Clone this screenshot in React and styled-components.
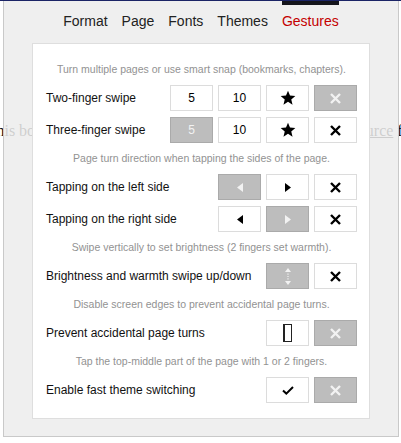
import styled, { createGlobalStyle } from "styled-components";

const GlobalStyle = createGlobalStyle`
  html, body {
    margin: 0;
    padding: 0;
    background: #fff;
  }
  body {
    font-family: "Liberation Sans", Arial, sans-serif;
    width: 401px;
    height: 443px;
    overflow: hidden;
  }
`;

const Page = styled.div`
  position: relative;
  height: 443px;
  overflow: hidden;
`;

const TopRule = styled.div`
  height: 1px;
  background: #1b2466;
`;

/* page text lying behind the popup */
const Backdrop = styled.p`
  margin: 0;
  padding-top: 120px;
  display: flex;
  justify-content: space-between;
  white-space: nowrap;
  font-family: "Liberation Serif", "Times New Roman", serif;
  font-size: 16px;
  line-height: 20px;
  color: #111;

  span:first-child {
    margin-left: -8px;
  }
  span:last-child {
    margin-right: -15px;
  }
  a {
    color: #111;
    text-decoration: underline;
  }
`;

const Panel = styled.div`
  position: absolute;
  top: 1px;
  left: 3px;
  width: 396px;
  height: 436px;
  box-sizing: border-box;
  background: rgba(236, 236, 236, 0.86);
  border: 1px solid #c9c9c9;
  border-top: none;
  padding: 0 28px;
  display: flex;
  flex-direction: column;
`;

const Tabs = styled.nav`
  display: flex;
  justify-content: center;
  align-items: flex-start;
  gap: 14px;
`;

const Tab = styled.div`
  box-sizing: border-box;
  border-top: 4px solid ${(p) => (p.$active ? "#15151c" : "transparent")};
  padding-top: 8px;
  font-size: 14px;
  line-height: 16px;
  color: ${(p) => (p.$active ? "#c40000" : "#222")};
`;

const Card = styled.div`
  margin-top: 14px;
  background: #fff;
  border: 1px solid #dedede;
  padding: 10px 12px 15px 13px;
`;

const Desc = styled.div`
  padding: 9px 0;
  font-size: 10.5px;
  line-height: 13px;
  color: #929292;
  text-align: center;
`;

const Rows = styled.div`
  display: flex;
  flex-direction: column;
  gap: 6px;
`;

const Row = styled.div`
  display: flex;
  align-items: center;
  height: 26px;
`;

const Label = styled.span`
  flex: 1;
  font-size: 12px;
  color: #111;
`;

const Options = styled.div`
  display: flex;
  gap: 5px;
`;

const Box = styled.div`
  width: 43px;
  height: 26px;
  box-sizing: border-box;
  display: flex;
  align-items: center;
  justify-content: center;
  border: 1px solid ${(p) => (p.$on ? "#aaaaaa" : "#dcdcdc")};
  background: ${(p) => (p.$on ? "#bdbdbd" : "#fff")};
  color: ${(p) => (p.$on ? "#f2f2f2" : "#000")};
  font-size: 12px;
`;

const Star = () => (
  <svg width="16" height="16" viewBox="0 0 24 24">
    <polygon
      points="12,1 15,8.4 23,9 16.9,14.2 18.8,22 12,17.8 5.2,22 7.1,14.2 1,9 9,8.4"
      fill="currentColor"
    />
  </svg>
);

const Cross = () => (
  <svg width="11" height="11" viewBox="0 0 11 11">
    <path
      d="M1 1 L10 10 M10 1 L1 10"
      stroke="currentColor"
      strokeWidth="2.4"
      fill="none"
    />
  </svg>
);

const Tri = ({ dir }) => (
  <svg width="6" height="9" viewBox="0 0 6 9">
    <polygon
      points={dir === "left" ? "6,0 0,4.5 6,9" : "0,0 6,4.5 0,9"}
      fill="currentColor"
    />
  </svg>
);

const UpDown = () => (
  <svg width="6" height="17" viewBox="0 0 6 17">
    <polygon points="3,0 6,4 0,4" fill="currentColor" />
    <polygon points="0,13 6,13 3,17" fill="currentColor" />
    <line
      x1="3"
      y1="5.5"
      x2="3"
      y2="12"
      stroke="currentColor"
      strokeWidth="1.2"
      strokeDasharray="1.2 1.2"
    />
  </svg>
);

const Phone = () => (
  <svg width="11" height="18" viewBox="0 0 11 18">
    <rect x="1.5" y="0.5" width="8" height="17" fill="none" stroke="#222" strokeWidth="1" />
    <line x1="2" y1="0.5" x2="2" y2="17.5" stroke="#222" strokeWidth="2" />
  </svg>
);

const Check = () => (
  <svg width="12" height="9" viewBox="0 0 12 9">
    <polyline
      points="1,4.5 4.3,7.6 11,1"
      fill="none"
      stroke="currentColor"
      strokeWidth="2"
    />
  </svg>
);

const sections = [
  {
    desc: "Turn multiple pages or use smart snap (bookmarks, chapters).",
    rows: [
      {
        label: "Two-finger swipe",
        opts: [{ c: "5" }, { c: "10" }, { c: <Star /> }, { c: <Cross />, on: true }],
      },
      {
        label: "Three-finger swipe",
        opts: [{ c: "5", on: true }, { c: "10" }, { c: <Star /> }, { c: <Cross /> }],
      },
    ],
  },
  {
    desc: "Page turn direction when tapping the sides of the page.",
    rows: [
      {
        label: "Tapping on the left side",
        opts: [{ c: <Tri dir="left" />, on: true }, { c: <Tri dir="right" /> }, { c: <Cross /> }],
      },
      {
        label: "Tapping on the right side",
        opts: [{ c: <Tri dir="left" /> }, { c: <Tri dir="right" />, on: true }, { c: <Cross /> }],
      },
    ],
  },
  {
    desc: "Swipe vertically to set brightness (2 fingers set warmth).",
    rows: [
      {
        label: "Brightness and warmth swipe up/down",
        opts: [{ c: <UpDown />, on: true }, { c: <Cross /> }],
      },
    ],
  },
  {
    desc: "Disable screen edges to prevent accidental page turns.",
    rows: [
      {
        label: "Prevent accidental page turns",
        opts: [{ c: <Phone /> }, { c: <Cross />, on: true }],
      },
    ],
  },
  {
    desc: "Tap the top-middle part of the page with 1 or 2 fingers.",
    rows: [
      {
        label: "Enable fast theme switching",
        opts: [{ c: <Check /> }, { c: <Cross />, on: true }],
      },
    ],
  },
];

const tabs = ["Format", "Page", "Fonts", "Themes", "Gestures"];

export default function App() {
  return (
    <>
      <GlobalStyle />
      <Page>
        <TopRule />
        <Backdrop>
          <span>this book</span>
          <span>
            open <a>source</a> for
          </span>
        </Backdrop>
        <Panel>
          <Tabs>
            {tabs.map((t) => (
              <Tab key={t} $active={t === "Gestures"}>
                {t}
              </Tab>
            ))}
          </Tabs>
          <Card>
            {sections.map((s) => (
              <div key={s.desc}>
                <Desc>{s.desc}</Desc>
                <Rows>
                  {s.rows.map((r) => (
                    <Row key={r.label}>
                      <Label>{r.label}</Label>
                      <Options>
                        {r.opts.map((o, i) => (
                          <Box key={i} $on={o.on}>
                            {o.c}
                          </Box>
                        ))}
                      </Options>
                    </Row>
                  ))}
                </Rows>
              </div>
            ))}
          </Card>
        </Panel>
      </Page>
    </>
  );
}
